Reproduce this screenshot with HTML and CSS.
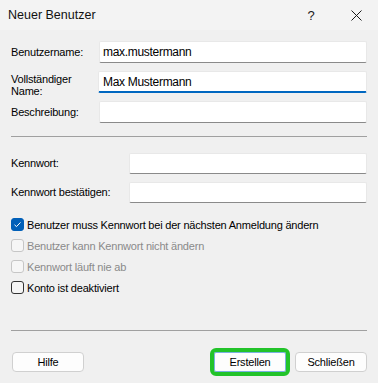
FILE: index.html
```html
<!DOCTYPE html>
<html lang="de">
<head>
<meta charset="utf-8">
<link rel="stylesheet" href="styles.css">
</head>
<body>
<div class="dialog">
  <div class="titlebar">
    <div class="title">Neuer Benutzer</div>
    <div class="caption-btn help">?</div>
    <div class="caption-btn close">
      <svg width="11" height="11" viewBox="0 0 11 11"><path d="M0.5 0.5 L10.5 10.5 M10.5 0.5 L0.5 10.5" stroke="#1a1a1a" stroke-width="1" fill="none"/></svg>
    </div>
  </div>
  <div class="body">
    <div class="grid grid-top">
      <div class="label">Benutzername:</div>
      <div class="input">max.mustermann</div>
      <div class="label label-two"><span>Vollständiger<br>Name:</span></div>
      <div class="input focused">Max Mustermann</div>
      <div class="label">Beschreibung:</div>
      <div class="input"></div>
    </div>
    <div class="sep sep1"></div>
    <div class="grid grid-pw">
      <div class="label">Kennwort:</div>
      <div class="input pw"></div>
      <div class="label">Kennwort bestätigen:</div>
      <div class="input pw"></div>
    </div>
    <div class="checks">
      <div class="check">
        <span class="box checked"><svg width="13" height="13" viewBox="0 0 13 13"><path d="M3.5 6.8 L5.5 8.6 L9.5 4.4" stroke="#ffffff" stroke-width="1" fill="none"/></svg></span>
        <span>Benutzer muss Kennwort bei der nächsten Anmeldung ändern</span>
      </div>
      <div class="check disabled">
        <span class="box"></span>
        <span>Benutzer kann Kennwort nicht ändern</span>
      </div>
      <div class="check disabled">
        <span class="box"></span>
        <span>Kennwort läuft nie ab</span>
      </div>
      <div class="check">
        <span class="box"></span>
        <span>Konto ist deaktiviert</span>
      </div>
    </div>
    <div class="sep sep2"></div>
    <div class="buttons">
      <div class="btn hilfe">Hilfe</div>
      <div class="spacer"></div>
      <div class="btn primary">Erstellen</div>
      <div class="btn">Schließen</div>
    </div>
  </div>
</div>
</body>
</html>
```
FILE: styles.css
```css
* { box-sizing: border-box; }
html, body { margin: 0; padding: 0; }
body {
  width: 378px;
  height: 383px;
  overflow: hidden;
  background: #f0f0f0;
  font-family: "Liberation Sans", Arial, sans-serif;
  font-size: 11px;
  letter-spacing: -0.2px;
  color: #000;
}
.dialog { width: 378px; height: 383px; display: flex; flex-direction: column; }
.titlebar {
  height: 30px;
  background: #f3f3f3;
  display: flex;
  align-items: center;
  flex-shrink: 0;
}
.title {
  flex: 1;
  padding-left: 8px;
  font-size: 12.5px;
  letter-spacing: 0;
  color: #111;
}
.caption-btn {
  width: 46px;
  height: 30px;
  display: flex;
  align-items: center;
  justify-content: center;
  font-size: 13px;
  color: #1a1a1a;
}
.caption-btn.close { width: 44px; }
.body { padding: 0 11px; display: flex; flex-direction: column; }
.grid { display: grid; align-items: center; }
.grid-top {
  margin-top: 11px;
  grid-template-columns: 88px 1fr;
  grid-auto-rows: 22px;
  row-gap: 8px;
}
.grid-pw {
  margin-top: 16px;
  grid-template-columns: 118px 1fr;
  grid-auto-rows: 21px;
  row-gap: 8px;
}
.label { white-space: nowrap; line-height: 13px; }
.label-two {
  align-self: start;
  height: 22px;
  padding-top: 2px;
  line-height: 12px;
}
.input {
  height: 100%;
  background: #fff;
  border: 1px solid #e8e8e8;
  border-bottom: 1px solid #8a8a8a;
  border-radius: 2px;
  padding: 0 3px;
  display: flex;
  align-items: center;
  font-size: 12px;
  letter-spacing: -0.3px;
  color: #000;
}
.input.focused {
  border-bottom: 2px solid #0067c0;
  margin-left: -1px;
  padding-left: 4px;
  padding-top: 1px;
}
.sep { height: 1px; background: #a0a0a0; }
.sep1 { margin-top: 13px; }
.checks { margin-top: 11px; display: flex; flex-direction: column; }
.check {
  height: 21px;
  display: flex;
  align-items: center;
  gap: 3px;
}
.box {
  width: 13px;
  height: 13px;
  border: 1px solid #333;
  border-radius: 3px;
  background: #f5f5f5;
  display: flex;
  flex-shrink: 0;
}
.box.checked { background: #005fb8; border-color: #005fb8; }
.box svg { margin: -1px; }
.check.disabled { color: #8a8a8a; }
.check.disabled .box { border-color: #c6c6c6; background: #f6f6f6; }
.sep2 { margin-top: 32px; }
.buttons {
  margin-top: 21px;
  display: flex;
  gap: 9px;
  align-items: center;
}
.spacer { flex: 1; }
.btn {
  width: 72px;
  height: 20px;
  background: #fdfdfd;
  border: 1px solid #d0d0d0;
  border-radius: 4px;
  display: flex;
  align-items: center;
  justify-content: center;
  font-size: 11px;
}
.btn.hilfe { margin-left: 1px; }
.btn.primary {
  outline: 4px solid #22c32a;
  border-color: #7ab0e0;
  border-radius: 2px;
}
```
